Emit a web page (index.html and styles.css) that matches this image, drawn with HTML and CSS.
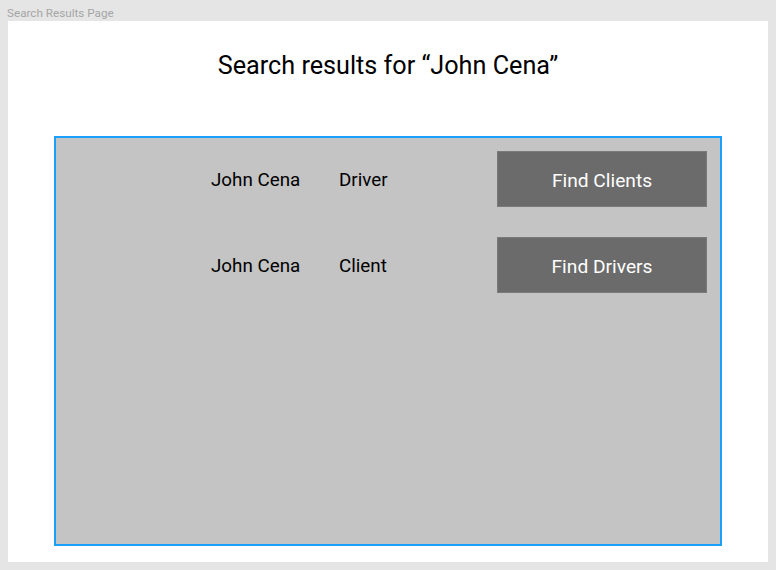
FILE: index.html
```html
<!DOCTYPE html>
<html>
<head>
<meta charset="utf-8">
<link rel="stylesheet" href="styles.css">
</head>
<body>
<div class="label">Search Results Page</div>
<div class="frame">
  <h1 class="title">Search results for “John Cena”</h1>
  <div class="results">
    <div class="row">
      <span class="name">John Cena</span>
      <span class="role">Driver</span>
      <button class="btn">Find Clients</button>
    </div>
    <div class="row">
      <span class="name">John Cena</span>
      <span class="role">Client</span>
      <button class="btn">Find Drivers</button>
    </div>
  </div>
</div>
</body>
</html>
```
FILE: styles.css
```css
html, body {
  margin: 0;
  padding: 0;
  background: #e5e5e5;
  font-family: Roboto, "Noto Sans", sans-serif;
}
.label {
  height: 21px;
  box-sizing: border-box;
  padding: 6px 0 0 7px;
  font-size: 11.7px;
  line-height: 14px;
  color: #a6a6a6;
}
.frame {
  margin-left: 8px;
  width: 760px;
  height: 541px;
  background: #ffffff;
  box-sizing: border-box;
  padding: 29px 46px 0 46px;
}
.title {
  margin: 0;
  font-size: 25.2px;
  font-weight: 400;
  line-height: 31px;
  text-align: center;
  color: #000;
}
.results {
  margin-top: 55px;
  width: 668px;
  height: 410px;
  box-sizing: border-box;
  border: 2px solid #18a0fb;
  background: #c4c4c4;
  padding: 13px 13px 0 0;
  display: flex;
  flex-direction: column;
  gap: 30px;
}
.row {
  display: flex;
  align-items: center;
  height: 56px;
  padding-left: 155px;
  font-size: 18.8px;
  line-height: 22px;
  color: #000;
}
.name {
  width: 128px;
  padding-top: 2px;
}
.role {
  flex: 1;
  padding-top: 2px;
}
.btn {
  width: 210px;
  height: 56px;
  background: #6b6b6b;
  border: 1px solid #7a7a7a;
  color: #ffffff;
  font-family: Roboto, "Noto Sans", sans-serif;
  font-size: 19.2px;
  padding: 3px 0 0 0;
  cursor: pointer;
}
```
